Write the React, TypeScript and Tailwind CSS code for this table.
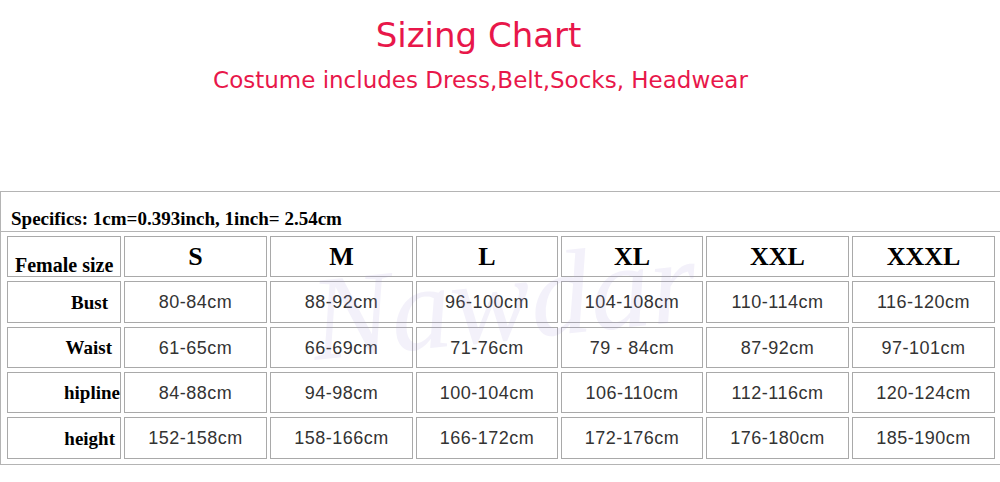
const SIZES = ['S', 'M', 'L', 'XL', 'XXL', 'XXXL'];

const ROWS = [
  { label: 'Bust', pad: 'pr-[12px]', values: ['80-84cm', '88-92cm', '96-100cm', '104-108cm', '110-114cm', '116-120cm'] },
  { label: 'Waist', pad: 'pr-[8px]', values: ['61-65cm', '66-69cm', '71-76cm', '79 - 84cm', '87-92cm', '97-101cm'] },
  { label: 'hipline', pad: 'pr-0', values: ['84-88cm', '94-98cm', '100-104cm', '106-110cm', '112-116cm', '120-124cm'] },
  { label: 'height', pad: 'pr-[5px]', values: ['152-158cm', '158-166cm', '166-172cm', '172-176cm', '176-180cm', '185-190cm'] },
];

const serif = "font-['Liberation_Serif',serif] font-bold text-black";
const cell = 'border border-[#a9a9a9] bg-white';

export default function App() {
  return (
    <div className="relative w-[1000px] h-[482px] overflow-hidden bg-white">
      {/* heading */}
      <div className="h-[191px] text-[#e8174a] font-['DejaVu_Sans',sans-serif]">
        <h1 className="pt-[15px] pr-[43px] text-center text-[34px] leading-[40px]">Sizing Chart</h1>
        <p className="mt-[11px] pr-[39px] text-center text-[23px] leading-[28px]">
          Costume includes Dress,Belt,Socks, Headwear
        </p>
      </div>

      {/* chart box */}
      <div className="w-[1002px] border border-[#b4b4b4] h-[274px]">
        <div className="h-[40px] flex items-end pl-[10px] pb-[1px] border-b border-[#b4b4b4]">
          <span className={`${serif} text-[19px] leading-[22px]`}>Specifics: 1cm=0.393inch, 1inch= 2.54cm</span>
        </div>

        <div className="pt-[4px] pl-[6px] grid grid-cols-[114px_143px_143px_142px_142px_143px_143px] grid-rows-[41px_42px_41px_41px_42px] gap-x-[3px] gap-y-[4px]">
          <div className={`${cell} ${serif} flex items-end pl-[7px] pb-0 text-[20px] leading-[22px]`}>Female size</div>
          {SIZES.map((s) => (
            <div key={s} className={`${cell} ${serif} flex items-center justify-center text-[26px] leading-none`}>
              {s}
            </div>
          ))}

          {ROWS.map((row) => (
            <>
              <div key={row.label} className={`${cell} ${serif} ${row.pad} flex items-center justify-end text-[19px] leading-none`}>
                {row.label}
              </div>
              {row.values.map((v, i) => (
                <div
                  key={row.label + i}
                  className={`${cell} flex items-center justify-center font-['Liberation_Sans',sans-serif] text-[18px] tracking-[0.5px] text-[#333] leading-none`}
                >
                  {v}
                </div>
              ))}
            </>
          ))}
        </div>
      </div>

      {/* watermark */}
      <div className="absolute left-[310px] top-[240px] pointer-events-none select-none font-['Liberation_Serif',serif] italic text-[120px] leading-none text-[#a596dc] opacity-[0.13] -rotate-6">
        Nawdar
      </div>
    </div>
  );
}
